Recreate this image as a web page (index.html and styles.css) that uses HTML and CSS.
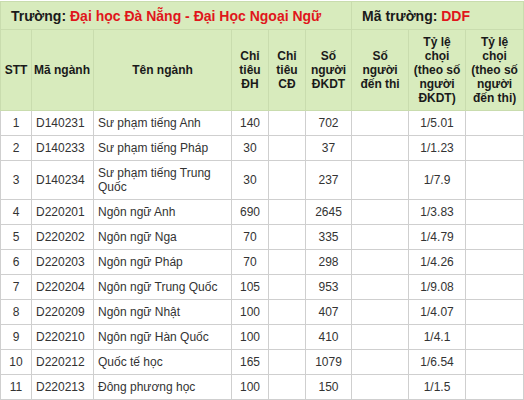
FILE: index.html
```html
<!DOCTYPE html>
<html lang="vi">
<head>
<meta charset="utf-8">
<title>Đại học Đà Nẵng - Đại Học Ngoại Ngữ</title>
<link rel="stylesheet" href="styles.css">
</head>
<body>
<table class="grid">
  <colgroup>
    <col class="c-stt"><col class="c-ma"><col class="c-ten"><col class="c-dh"><col class="c-cd"><col class="c-dk"><col class="c-dt"><col class="c-tl1"><col class="c-tl2">
  </colgroup>
  <thead>
    <tr class="title-row">
      <th colspan="6" class="title"><span class="label">Trường:</span> <span class="red">Đại học Đà Nẵng - Đại Học Ngoại Ngữ</span></th>
      <th colspan="3" class="title"><span class="label">Mã trường:</span> <span class="red">DDF</span></th>
    </tr>
    <tr class="head-row">
      <th>STT</th>
      <th class="left">Mã ngành</th>
      <th>Tên ngành</th>
      <th>Chỉ<br>tiêu<br>ĐH</th>
      <th>Chỉ<br>tiêu<br>CĐ</th>
      <th>Số<br>người<br>ĐKDT</th>
      <th>Số<br>người<br>đến thi</th>
      <th>Tỷ lệ<br>chọi<br>(theo số<br>người<br>ĐKDT)</th>
      <th>Tỷ lệ<br>chọi<br>(theo số<br>người<br>đến thi)</th>
    </tr>
  </thead>
  <tbody>
    <tr><td>1</td><td class="left">D140231</td><td class="left">Sư phạm tiếng Anh</td><td>140</td><td></td><td>702</td><td></td><td>1/5.01</td><td></td></tr>
    <tr><td>2</td><td class="left">D140233</td><td class="left">Sư phạm tiếng Pháp</td><td>30</td><td></td><td>37</td><td></td><td>1/1.23</td><td></td></tr>
    <tr><td>3</td><td class="left">D140234</td><td class="left">Sư phạm tiếng Trung Quốc</td><td>30</td><td></td><td>237</td><td></td><td>1/7.9</td><td></td></tr>
    <tr><td>4</td><td class="left">D220201</td><td class="left">Ngôn ngữ Anh</td><td>690</td><td></td><td>2645</td><td></td><td>1/3.83</td><td></td></tr>
    <tr><td>5</td><td class="left">D220202</td><td class="left">Ngôn ngữ Nga</td><td>70</td><td></td><td>335</td><td></td><td>1/4.79</td><td></td></tr>
    <tr><td>6</td><td class="left">D220203</td><td class="left">Ngôn ngữ Pháp</td><td>70</td><td></td><td>298</td><td></td><td>1/4.26</td><td></td></tr>
    <tr><td>7</td><td class="left">D220204</td><td class="left">Ngôn ngữ Trung Quốc</td><td>105</td><td></td><td>953</td><td></td><td>1/9.08</td><td></td></tr>
    <tr><td>8</td><td class="left">D220209</td><td class="left">Ngôn ngữ Nhật</td><td>100</td><td></td><td>407</td><td></td><td>1/4.07</td><td></td></tr>
    <tr><td>9</td><td class="left">D220210</td><td class="left">Ngôn ngữ Hàn Quốc</td><td>100</td><td></td><td>410</td><td></td><td>1/4.1</td><td></td></tr>
    <tr><td>10</td><td class="left">D220212</td><td class="left">Quốc tế học</td><td>165</td><td></td><td>1079</td><td></td><td>1/6.54</td><td></td></tr>
    <tr><td>11</td><td class="left">D220213</td><td class="left">Đông phương học</td><td>100</td><td></td><td>150</td><td></td><td>1/1.5</td><td></td></tr>
  </tbody>
</table>
</body>
</html>
```

FILE: styles.css
```css
html, body {
  margin: 0;
  padding: 0;
  background: #ffffff;
}

body {
  font-family: "Liberation Sans", Arial, sans-serif;
  color: #333333;
}

.grid {
  border-collapse: collapse;
  table-layout: fixed;
  width: 523px;
  margin-top: 1px;
}

.c-stt { width: 31px; }
.c-ma { width: 62px; }
.c-ten { width: 138px; }
.c-dh { width: 37px; }
.c-cd { width: 37px; }
.c-dk { width: 46px; }
.c-dt { width: 57px; }
.c-tl1 { width: 57px; }
.c-tl2 { width: 58px; }

.grid th,
.grid td {
  border: 1px solid #cfcfcf;
  text-align: center;
  vertical-align: middle;
}

.grid td {
  font-size: 12px;
  line-height: 14px;
  padding: 5px 4px;
}

.grid td.left {
  text-align: left;
}

.grid thead th {
  background: #d8ebbd;
  border-color: #c9dcae;
  color: #1a1a1a;
  font-weight: bold;
}

.title-row th {
  height: 27px;
  font-size: 14px;
  line-height: 16px;
  text-align: left;
  padding: 0 10px;
}

.title .red {
  color: #e0161b;
}

.head-row th {
  height: 80px;
  font-size: 12px;
  line-height: 14px;
  padding: 0 2px;
}

.head-row th.left {
  text-align: left;
}
```
